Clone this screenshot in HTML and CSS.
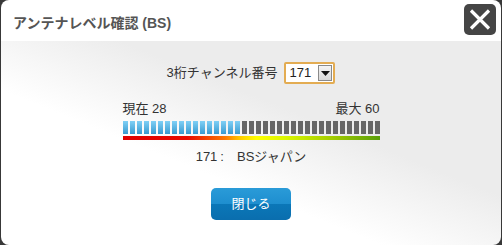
FILE: index.html
```html
<!DOCTYPE html>
<html lang="ja">
<head>
<meta charset="utf-8">
<link rel="stylesheet" href="styles.css">
</head>
<body>
<div class="dialog">
  <div class="header">
    <div class="title">アンテナレベル確認 (BS)</div>
    <div class="close">
      <svg width="32" height="31" viewBox="0 0 32 31"><path d="M7 6.5 L25 24.5 M25 6.5 L7 24.5" stroke="#fff" stroke-width="3.2" stroke-linecap="butt" fill="none"/></svg>
    </div>
  </div>
  <div class="body">
    <div class="channel-row">
      <span class="label">3桁チャンネル番号</span>
      <div class="select">
        <span class="select-value">171</span>
        <span class="select-btn"><svg width="9" height="5" viewBox="0 0 9 5"><path d="M0 0 H9 L4.5 5 Z" fill="#111"/></svg></span>
      </div>
    </div>
    <div class="level">
      <div class="level-labels">
        <span>現在 28</span>
        <span>最大 60</span>
      </div>
      <div class="segments">
        <i class="on"></i><i class="on"></i><i class="on"></i><i class="on"></i><i class="on"></i><i class="on"></i><i class="on"></i><i class="on"></i><i class="on"></i><i class="on"></i><i class="on"></i><i class="on"></i><i class="on"></i><i class="on"></i><i class="on"></i><i class="on"></i><i class="on"></i><i></i><i></i><i></i><i></i><i></i><i></i><i></i><i></i><i></i><i></i><i></i><i></i><i></i><i></i><i></i><i></i><i></i><i></i><i></i><i></i>
      </div>
      <div class="strip"></div>
    </div>
    <div class="channel-name">171<span class="colon">:</span>BSジャパン</div>
    <div class="btn">閉じる</div>
  </div>
</div>
</body>
</html>
```
FILE: styles.css
```css
html, body {
  margin: 0;
  padding: 0;
}
body {
  width: 502px;
  height: 245px;
  overflow: hidden;
  background: #383838;
  font-family: "Liberation Sans", "Noto Sans CJK JP", sans-serif;
  color: #333;
}
.dialog {
  margin-left: 1px;
  width: 500px;
  height: 245px;
  border-radius: 8px;
  overflow: hidden;
  display: flex;
  flex-direction: column;
}
.header {
  height: 41px;
  flex: none;
  background: #fff;
  display: flex;
  justify-content: space-between;
  align-items: flex-start;
}
.title {
  margin-left: 12px;
  margin-top: 14px;
  font-size: 14px;
  line-height: 18px;
  font-weight: bold;
  color: #555;
}
.close {
  margin-top: 4px;
  margin-right: 5px;
  width: 32px;
  height: 31px;
  border-radius: 5px;
  background: #454545;
}
.close svg {
  display: block;
}
.body {
  flex: 1;
  background: linear-gradient(to top right, #fff 38%, #ececec 62%);
  display: flex;
  flex-direction: column;
  align-items: center;
}
.channel-row {
  margin-top: 21px;
  display: flex;
  align-items: center;
  gap: 7px;
}
.label {
  font-size: 13px;
  line-height: 22px;
  color: #333;
}
.select {
  width: 47px;
  height: 18px;
  border: 2px solid #e3ac52;
  border-radius: 2px;
  background: #fff;
  display: flex;
  align-items: center;
  justify-content: space-between;
}
.select-value {
  font-size: 13px;
  line-height: 16px;
  margin-left: 3px;
  color: #222;
}
.select-btn {
  width: 14px;
  height: 16px;
  border: 1px solid #8a8a8a;
  background: linear-gradient(#f4f4f4, #d8d8d8);
  display: flex;
  align-items: center;
  justify-content: center;
  box-sizing: border-box;
  margin-right: 1px;
}
.select-btn svg {
  display: block;
}
.level {
  margin-top: 17px;
  width: 257px;
}
.level-labels {
  display: flex;
  justify-content: space-between;
  font-size: 13px;
  line-height: 16px;
  color: #333;
}
.segments {
  margin-top: 4px;
  display: flex;
  gap: 2px;
  height: 13px;
}
.segments i {
  display: block;
  width: 5px;
  height: 13px;
  background: #666;
}
.segments i.on {
  background: linear-gradient(#80d0f6, #399acf);
}
.strip {
  margin-top: 2px;
  height: 4px;
  background: linear-gradient(to right, #e00000 0%, #e90a00 25%, #ff7a00 40%, #ffd000 46%, #ffff00 52%, #dcf700 63%, #a8d000 80%, #5a9e0a 100%);
}
.channel-name {
  margin-top: 9px;
  font-size: 13px;
  line-height: 16px;
  color: #333;
}
.colon {
  margin: 0 13px 0 3px;
}
.btn {
  margin-top: 23px;
  width: 80px;
  height: 32px;
  border-radius: 5px;
  background: linear-gradient(#2a9bd8 0%, #1e8ecf 50%, #0b77b8 50%, #0a6eae 100%);
  color: #fff;
  font-size: 13px;
  line-height: 32px;
  text-align: center;
}
```
